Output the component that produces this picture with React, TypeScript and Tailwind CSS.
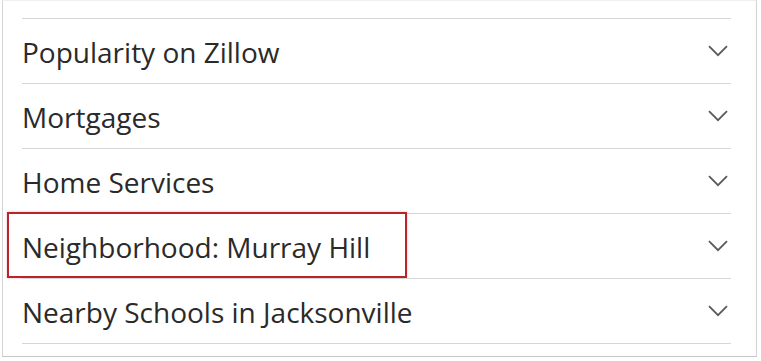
import { useState } from 'react';

const sections = [
  'Popularity on Zillow',
  'Mortgages',
  'Home Services',
  'Neighborhood: Murray Hill',
  'Nearby Schools in Jacksonville',
];

function Chevron() {
  return (
    <svg width="20" height="12" viewBox="0 0 20 12" fill="none" className="shrink-0">
      <polyline points="1,1.2 10,10.2 19,1.2" stroke="#5a5a5a" strokeWidth="1.8" />
    </svg>
  );
}

export default function App() {
  const [open, setOpen] = useState<number | null>(null);

  return (
    <div className="w-[761px] h-[361px] bg-white" style={{ fontFamily: '"Open Sans", "Noto Sans", sans-serif' }}>
      <div className="ml-[2px] w-[755px] h-[357px] border-x border-b border-t border-x-[#d4d4d4] border-b-[#c8c8c8] border-t-[#efefef] pl-[19px] pr-[25px] pt-[17px]">
        <ul className="border-b border-[#d6d6d6]">
          {sections.map((title, i) => (
            <li key={title} className="relative border-t border-[#d6d6d6]">
              <button
                onClick={() => setOpen(open === i ? null : i)}
                className="w-full h-[64px] flex items-center justify-between pr-[3px] text-left"
              >
                <span className="text-[28px] leading-none text-[#2a2a2a] pt-[1px]">{title}</span>
                <Chevron />
              </button>
              {i === 3 && (
                <div className="absolute left-[-15px] top-[-2px] w-[400px] h-[66px] border-2 border-[#b9232b] shadow-[0_0_2px_rgba(185,35,43,0.35)] pointer-events-none" />
              )}
            </li>
          ))}
        </ul>
      </div>
    </div>
  );
}
